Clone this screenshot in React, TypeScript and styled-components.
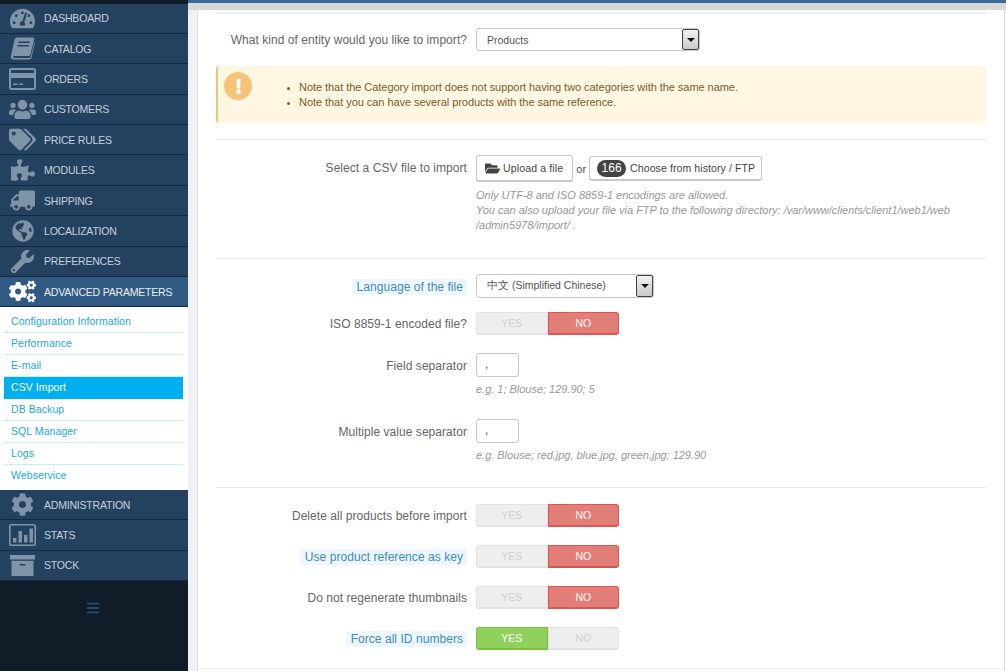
import React from "react";
import styled, { createGlobalStyle } from "styled-components";
import {
  FaTachometerAlt, FaUsers, FaTags, FaPuzzlePiece, FaTruck,
  FaGlobeAmericas, FaWrench, FaCogs, FaCog, FaBars, FaFolderOpen, FaExclamation,
} from "react-icons/fa";

const Global = createGlobalStyle`
  html, body { margin: 0; padding: 0; height: 100%; overflow: hidden; background: #fff; }
  body { font-family: "Liberation Sans", Arial, sans-serif; }
  #root { height: 100%; }
  * { box-sizing: border-box; }
`;

const Page = styled.div`
  display: flex;
  width: 1006px;
  height: 671px;
  overflow: hidden;
`;
const Sidebar = styled.nav`
  width: 188px;
  flex: none;
  height: 671px;
  background: #101c28;
  padding-top: 3.5px;
`;
const MenuItem = styled.div<{ $active?: boolean }>`
  height: 30.4px;
  display: flex;
  align-items: center;
  background: ${(p) => (p.$active ? "#305a82" : "#244260")};
  border-bottom: 1px solid #14293d;
  color: ${(p) => (p.$active ? "#e8edf2" : "#c5d0db")};
  font-size: 10.5px;
  letter-spacing: -0.2px;
  white-space: nowrap;
`;
const IconSlot = styled.span<{ $active?: boolean }>`
  width: 44px;
  flex: none;
  display: flex;
  justify-content: center;
  padding-left: 1px;
  color: ${(p) => (p.$active ? "#ffffff" : "#8094a9")};
`;
const FlipIcon = styled(FaTruck)`
  transform: scaleX(-1);
`;
const SubMenu = styled.div`
  background: #fff;
  padding: 3.5px 5px 0 4px;
  height: 182.5px;
`;
const SubItem = styled.div<{ $active?: boolean }>`
  height: 22px;
  padding-left: 7px;
  display: flex;
  align-items: center;
  font-size: 10.5px;
  letter-spacing: 0.08px;
  color: ${(p) => (p.$active ? "#fff" : "#1aa7e8")};
  background: ${(p) => (p.$active ? "#00aff0" : "#fff")};
  border-bottom: 1px solid ${(p) => (p.$active ? "#00aff0" : "#c8eefb")};
  &:last-child { border-bottom-color: transparent; }
`;
const Burger = styled.div`
  display: flex;
  justify-content: center;
  margin-top: 20px;
  color: #2a4a6b;
  padding-right: 2px;
`;
const Content = styled.div`
  flex: 1;
  min-width: 0;
  display: flex;
  flex-direction: column;
`;
const TopBar = styled.div`
  height: 3px;
  background: #3a6898;
  flex: none;
`;
const TopShade = styled.div`
  height: 7px;
  background: #d8d8d8;
  flex: none;
`;
const Body = styled.div`
  flex: 1;
  display: flex;
  min-height: 0;
  padding-right: 1px;
`;
const Gutter = styled.div`
  width: 10px;
  flex: none;
  background: #f1f0f7;
  border-right: 1px solid #dcdcdc;
`;
const Main = styled.main`
  flex: 1;
  background: #fff;
  border-right: 1px solid #d9d5ea;
  overflow: hidden;
`;
const Panel = styled.div`
  width: 770px;
  margin: 2px 0 0 18px;
  border-top: 2px solid #eeeeee;
`;
const Row = styled.div<{ $top: number }>`
  display: grid;
  grid-template-columns: 251px 1fr;
  column-gap: 9px;
  align-items: start;
  margin-top: ${(p) => p.$top}px;
`;
const Label = styled.div<{ $h?: number }>`
  text-align: right;
  font-size: 12px;
  letter-spacing: 0.05px;
  color: #666;
  height: ${(p) => p.$h ?? 22}px;
  line-height: ${(p) => (p.$h ?? 22) + 2}px;
  white-space: nowrap;
`;
const HintLabel = styled.span`
  background: #edf7fd;
  color: #3f8cc4;
  padding: 1px 4px 1px 5px;
  border-radius: 2px;
`;
const SelectBox = styled.div<{ $w: number; $h: number }>`
  width: ${(p) => p.$w}px;
  height: ${(p) => p.$h}px;
  border: 1px solid #c7c7c7;
  border-radius: 3px;
  background: #fff;
  display: flex;
  align-items: center;
  padding-left: 10px;
  font-size: 10.5px;
  color: #555;
  position: relative;
`;
const SelectArrow = styled.span`
  position: absolute;
  right: 0;
  top: 0;
  bottom: 0;
  width: 17px;
  background: linear-gradient(#f2f2f2, #c9c9c9);
  border: 1px solid #444;
  border-radius: 2px;
  display: flex;
  align-items: center;
  justify-content: center;
  &::after {
    content: "";
    border-left: 4px solid transparent;
    border-right: 4px solid transparent;
    border-top: 4px solid #111;
  }
`;
const Alert = styled.div`
  height: 57px;
  margin-top: 15px;
  background: #fff7e1;
  border-left: 2px solid #f2c277;
  border-radius: 3px;
  display: flex;
  font-size: 11px;
  letter-spacing: -0.05px;
`;
const AlertIcon = styled.span`
  width: 28px;
  height: 28px;
  margin: 6px 0 0 6px;
  border-radius: 50%;
  background: #f5c37a;
  color: #fff;
  display: flex;
  align-items: center;
  justify-content: center;
  flex: none;
`;
const AlertList = styled.ul`
  margin: 14px 0 0;
  padding: 0 0 0 47px;
  line-height: 15px;
  & li { color: #7a5c2c; }
  & li::marker { font-size: 9px; }
`;
const Divider = styled.div<{ $top: number }>`
  height: 1px;
  background: #e8e8e8;
  margin-top: ${(p) => p.$top}px;
`;
const Controls = styled.div`
  display: flex;
  align-items: center;
  font-size: 12px;
  color: #555;
`;
const Button = styled.div<{ $h: number }>`
  height: ${(p) => p.$h}px;
  display: flex;
  align-items: center;
  background: #fff;
  border: 1px solid #c7c7c7;
  border-bottom-width: 2px;
  border-radius: 3px;
  font-size: 10.5px;
  color: #444;
  letter-spacing: 0.1px;
  padding: 0 6px 0 7px;
  white-space: nowrap;
`;
const UploadButton = styled(Button)`
  padding: 0 9px 0 8px;
  letter-spacing: 0.15px;
`;
const FolderIcon = styled(FaFolderOpen)`
  margin-right: 3px;
`;
const Or = styled.span`
  margin: 0 3px;
  font-size: 11px;
`;
const Badge = styled.span`
  width: 29px;
  height: 17px;
  border-radius: 9px;
  background: #444;
  color: #fff;
  font-size: 12px;
  display: flex;
  align-items: center;
  justify-content: center;
  margin: 0 4px 0 0;
  flex: none;
`;
const Help = styled.div<{ $top?: number }>`
  font-size: 11px;
  letter-spacing: -0.02px;
  font-style: italic;
  color: #999;
  line-height: 15px;
  margin-top: ${(p) => p.$top ?? 5}px;
  width: 490px;
`;
const Toggle = styled.div`
  display: flex;
  width: 143px;
  height: 23px;
  font-size: 10.5px;
`;
const ToggleSide = styled.div<{ $state: "off" | "no" | "yes"; $left?: boolean }>`
  width: 50%;
  display: flex;
  align-items: center;
  justify-content: center;
  border-radius: ${(p) => (p.$left ? "3px 0 0 3px" : "0 3px 3px 0")};
  background: ${(p) => (p.$state === "no" ? "#e37d78" : p.$state === "yes" ? "#92d05d" : "#eeeeee")};
  color: ${(p) => (p.$state === "off" ? "#cfcfcf" : "#fff")};
  border: 1px solid ${(p) => (p.$state === "no" ? "#dc5750" : p.$state === "yes" ? "#7cc146" : "#e2e2e2")};
  border-bottom-width: 2px;
`;
const SmallInput = styled.div`
  width: 43px;
  height: 24px;
  border: 1px solid #c7c7c7;
  border-radius: 3px;
  background: #fff;
  font-size: 12px;
  color: #555;
  padding: 3px 0 0 8px;
`;
const BottomLine = styled.div`
  height: 1px;
  background: #eeeeee;
  margin-top: 18px;
`;

const BookIcon = () => (
  <svg width="25" height="23" viewBox="0 0 25 23" fill="currentColor">
    <path fillRule="evenodd" d="M7 0.5H23Q24.6 0.5 24.2 2.2L20.4 17.5Q20 19 18.4 19H4.6Q3 19 3.2 20.2 3.4 21 4.6 21H19.2Q20.4 21 20.8 19.6L24.4 5 25 5.6 21.5 20.4Q21 22.5 19 22.5H3.5Q0.6 22.5 0.8 19.6 0.9 18.6 1.4 17L4.6 2.4Q5 0.5 7 0.5ZM8.5 4.6 8.1 6H19.6L20 4.6ZM7.6 8 7.2 9.4H18.7L19.1 8Z" />
  </svg>
);
const CardIcon = () => (
  <svg width="27" height="22" viewBox="0 0 27 22" fill="currentColor">
    <path fillRule="evenodd" d="M2.5 0H24.5Q27 0 27 2.5V19.5Q27 22 24.5 22H2.5Q0 22 0 19.5V2.5Q0 0 2.5 0ZM2.2 2 2 2.4V5H25V2.4L24.8 2ZM2 10V19.6L2.2 20H24.8L25 19.6V10ZM4 15.5H8.5V17H4ZM10 15.5H14V17H10Z" />
  </svg>
);
const StatsIcon = () => (
  <svg width="27" height="22" viewBox="0 0 27 22" fill="currentColor">
    <path fillRule="evenodd" d="M2.5 0H24.5Q27 0 27 2.5V19.5Q27 22 24.5 22H2.5Q0 22 0 19.5V2.5Q0 0 2.5 0ZM2.2 1.6 1.6 2.4V19.6L2.2 20.4H24.8L25.4 19.6V2.4L24.8 1.6ZM4 14H7.5V18.5H4ZM9.5 7H13V18.5H9.5ZM15 11H18.5V18.5H15ZM20.5 4.5H24V18.5H20.5Z" />
  </svg>
);
const StockIcon = () => (
  <svg width="25" height="21" viewBox="0 0 25 21" fill="currentColor">
    <path fillRule="evenodd" d="M0 0H25V4.6H0ZM1.5 5.8H23.5V21H1.5ZM9.5 9V10.6H15.5V9Z" />
  </svg>
);

const items: [string, React.ReactNode][] = [
  ["DASHBOARD", <FaTachometerAlt size={25} />],
  ["CATALOG", <BookIcon />],
  ["ORDERS", <CardIcon />],
  ["CUSTOMERS", <FaUsers size={27} />],
  ["PRICE RULES", <FaTags size={27} />],
  ["MODULES", <FaPuzzlePiece size={24} />],
  ["SHIPPING", <FlipIcon size={25} />],
  ["LOCALIZATION", <FaGlobeAmericas size={22} />],
  ["PREFERENCES", <FaWrench size={23} />],
];
const subs = ["Configuration Information", "Performance", "E-mail", "CSV Import", "DB Backup", "SQL Manager", "Logs", "Webservice"];

const YesNo = ({ on }: { on: boolean }) => (
  <Toggle>
    <ToggleSide $left $state={on ? "yes" : "off"}>YES</ToggleSide>
    <ToggleSide $state={on ? "off" : "no"}>NO</ToggleSide>
  </Toggle>
);

export default function App() {
  return (
    <Page>
      <Global />
      <Sidebar>
        {items.map(([t, i]) => (
          <MenuItem key={t}>
            <IconSlot>{i}</IconSlot>
            {t}
          </MenuItem>
        ))}
        <MenuItem $active>
          <IconSlot $active><FaCogs size={27} /></IconSlot>
          ADVANCED PARAMETERS
        </MenuItem>
        <SubMenu>
          {subs.map((s) => (
            <SubItem key={s} $active={s === "CSV Import"}>{s}</SubItem>
          ))}
        </SubMenu>
        <MenuItem><IconSlot><FaCog size={23} /></IconSlot>ADMINISTRATION</MenuItem>
        <MenuItem><IconSlot><StatsIcon /></IconSlot>STATS</MenuItem>
        <MenuItem><IconSlot><StockIcon /></IconSlot>STOCK</MenuItem>
        <Burger><FaBars size={14} /></Burger>
      </Sidebar>
      <Content>
        <TopBar />
        <TopShade />
        <Body>
          <Gutter />
          <Main>
            <Panel>
              <Row $top={14}>
                <Label>What kind of entity would you like to import?</Label>
                <SelectBox $w={224} $h={23}>Products<SelectArrow /></SelectBox>
              </Row>
              <Alert>
                <AlertIcon><FaExclamation size={15} /></AlertIcon>
                <AlertList>
                  <li>Note that the Category import does not support having two categories with the same name.</li>
                  <li>Note that you can have several products with the same reference.</li>
                </AlertList>
              </Alert>
              <Divider $top={16} />
              <Row $top={15}>
                <Label $h={24}>Select a CSV file to import</Label>
                <div>
                  <Controls>
                    <UploadButton $h={27}><FolderIcon size={15} />Upload a file</UploadButton>
                    <Or>or</Or>
                    <Button $h={25}><Badge>166</Badge>Choose from history / FTP</Button>
                  </Controls>
                  <Help $top={6}>
                    Only UTF-8 and ISO 8859-1 encodings are allowed.<br />
                    You can also upload your file via FTP to the following directory: /var/www/clients/client1/web1/web<br />
                    /admin5978/import/ .
                  </Help>
                </div>
              </Row>
              <Divider $top={25} />
              <Row $top={15}>
                <Label $h={24}><HintLabel>Language of the file</HintLabel></Label>
                <SelectBox $w={178} $h={24}>中文 (Simplified Chinese)<SelectArrow /></SelectBox>
              </Row>
              <Row $top={14}>
                <Label $h={23}>ISO 8859-1 encoded file?</Label>
                <YesNo on={false} />
              </Row>
              <Row $top={18}>
                <Label $h={24}>Field separator</Label>
                <div>
                  <SmallInput>,</SmallInput>
                  <Help>e.g. 1; Blouse; 129.90; 5</Help>
                </div>
              </Row>
              <Row $top={22}>
                <Label $h={24}>Multiple value separator</Label>
                <div>
                  <SmallInput>,</SmallInput>
                  <Help>e.g. Blouse; red.jpg, blue.jpg, green.jpg; 129.90</Help>
                </div>
              </Row>
              <Divider $top={24} />
              <Row $top={16}>
                <Label $h={23}>Delete all products before import</Label>
                <YesNo on={false} />
              </Row>
              <Row $top={18}>
                <Label $h={23}><HintLabel>Use product reference as key</HintLabel></Label>
                <YesNo on={false} />
              </Row>
              <Row $top={18}>
                <Label $h={23}>Do not regenerate thumbnails</Label>
                <YesNo on={false} />
              </Row>
              <Row $top={18}>
                <Label $h={23}><HintLabel>Force all ID numbers</HintLabel></Label>
                <YesNo on={true} />
              </Row>
            </Panel>
            <BottomLine />
          </Main>
        </Body>
      </Content>
    </Page>
  );
}
